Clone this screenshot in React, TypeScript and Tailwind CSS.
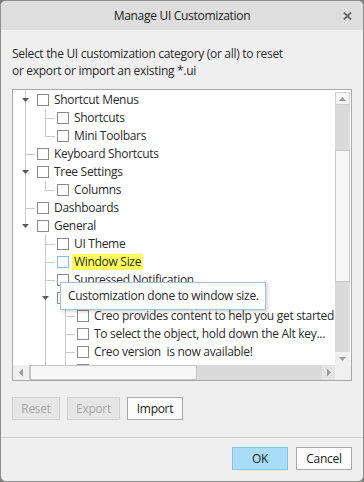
import React from 'react';

type Cell = 'none' | 'pass' | 'tee' | 'end' | 'arrow' | 'arrowEnd';

// visible part of the customization tree, top rows scrolled out of view
const rows: { id: number; label: string; cells: Cell[]; hover?: boolean }[] = [
  { id: 1, label: 'Shortcut Menus', cells: ['arrow'] },
  { id: 2, label: 'Shortcuts', cells: ['pass', 'tee'] },
  { id: 3, label: 'Mini Toolbars', cells: ['pass', 'end'] },
  { id: 4, label: 'Keyboard Shortcuts', cells: ['tee'] },
  { id: 5, label: 'Tree Settings', cells: ['arrow'] },
  { id: 6, label: 'Columns', cells: ['pass', 'end'] },
  { id: 7, label: 'Dashboards', cells: ['tee'] },
  { id: 8, label: 'General', cells: ['arrowEnd'] },
  { id: 9, label: 'UI Theme', cells: ['none', 'tee'] },
  { id: 10, label: 'Window Size', cells: ['none', 'tee'], hover: true },
  { id: 11, label: 'Supressed Notification', cells: ['none', 'tee'] },
  { id: 12, label: '', cells: ['none', 'arrow'] },
  { id: 13, label: 'Creo provides content to help you get started', cells: ['none', 'pass', 'tee'] },
  { id: 14, label: 'To select the object, hold down the Alt key...', cells: ['none', 'pass', 'tee'] },
  { id: 15, label: 'Creo version  is now available!', cells: ['none', 'pass', 'tee'] },
  { id: 16, label: '', cells: ['none', 'pass', 'tee'] },
];

const GuideCell = ({ type }: { type: Cell }) => (
  <svg width="20" height="18" className="shrink-0">
    {(type === 'pass' || type === 'tee' || type === 'arrow') && (
      <line x1="10.5" y1="0" x2="10.5" y2="18" stroke="#c9c9c9" />
    )}
    {(type === 'end' || type === 'arrowEnd') && (
      <line x1="10.5" y1="0" x2="10.5" y2="9.5" stroke="#c9c9c9" />
    )}
    {(type === 'tee' || type === 'end') && (
      <line x1="10" y1="9.5" x2="20" y2="9.5" stroke="#c9c9c9" />
    )}
    {(type === 'arrow' || type === 'arrowEnd') && (
      <polygon points="7,7 14,7 10.5,11" fill="#5a5a5a" />
    )}
  </svg>
);

const TreeRow = ({ label, cells, hover }: { label: string; cells: Cell[]; hover?: boolean }) => (
  <div className="h-[18px] flex items-center whitespace-pre">
    {cells.map((c, i) => (
      <GuideCell key={i} type={c} />
    ))}
    <span
      className={`ml-[2px] w-[12px] h-[12px] shrink-0 bg-white border ${
        hover ? 'border-[#7fbfe2]' : 'border-[#8a8a8a]'
      }`}
    />
    {hover ? (
      <span className="ml-[3px] px-[2px] leading-[16px] bg-[#ffff5c]">{label}</span>
    ) : (
      label && <span className="ml-[5px] leading-[16px]">{label}</span>
    )}
  </div>
);

const Arrow = ({ dir }: { dir: 'up' | 'down' | 'left' | 'right' }) => {
  const pts = {
    up: '1,5 8,5 4.5,1',
    down: '1,1 8,1 4.5,5',
    left: '5,0.5 5,8.5 1,4.5',
    right: '1,0.5 1,8.5 5,4.5',
  }[dir];
  const vertical = dir === 'up' || dir === 'down';
  return (
    <svg width={vertical ? 9 : 6} height={vertical ? 6 : 9}>
      <polygon points={pts} fill="#9a9a9a" />
    </svg>
  );
};

export default function App() {
  return (
    <div className="w-[364px] h-[482px] bg-[#7c7c78] font-['Open_Sans',sans-serif] text-[12px] tracking-[-0.3px] text-[#2b2b2b]">
      <div className="h-full flex flex-col rounded-[6px] border border-[#8f8f8f] bg-[#efefef] overflow-hidden">
        {/* title bar */}
        <div className="relative h-[29px] shrink-0 bg-[#dedede] flex items-center justify-center text-[#222]">
          <span>Manage UI Customization</span>
          <svg className="absolute right-[11px] top-[11px]" width="9" height="8" viewBox="0 0 9 8">
            <path d="M1 0.5 L8 7.5 M8 0.5 L1 7.5" stroke="#6a6a6a" strokeWidth="1.8" />
          </svg>
        </div>

        <div className="px-[11px] pt-[15px] leading-[17px]">
          Select the UI customization category (or all) to reset
          <br />
          or export or import an existing *.ui
        </div>

        {/* tree box */}
        <div className="mx-[11px] mt-[10px] w-[340px] h-[292px] shrink-0 border border-[#a9a9a9] bg-white flex flex-col">
          <div className="flex h-[275px]">
            <div className="relative flex-1 overflow-hidden pt-[1px] pl-[2px]">
              {rows.map((r) => (
                <TreeRow key={r.id} label={r.label} cells={r.cells} hover={r.hover} />
              ))}
              <div className="absolute left-[47px] top-[192px] w-[206px] h-[28px] bg-[#fdfdfd] border border-[#a9bfd2] shadow-[2px_2px_3px_rgba(0,0,0,0.15)] flex items-center pl-[7px]">
                Customization done to window size.
              </div>
            </div>
            {/* vertical scrollbar */}
            <div className="w-[15px] mr-[1px] flex flex-col pt-[2px]">
              <div className="h-[13px] bg-[#f7f7f7] border border-[#d0d0d0] flex items-center justify-center">
                <Arrow dir="up" />
              </div>
              <div className="h-[45px] bg-[#dadada]" />
              <div className="h-[132px] bg-[#f7f7f7] border border-[#c6c6c6]" />
              <div className="h-[70px] bg-[#dadada]" />
              <div className="h-[13px] bg-[#f0f0f0] flex items-center justify-center">
                <Arrow dir="down" />
              </div>
            </div>
          </div>
          {/* horizontal scrollbar */}
          <div className="flex h-[15px]">
            <div className="w-[17px] bg-[#f0f0f0] border-r border-[#c9c9c9] flex items-center justify-center">
              <Arrow dir="left" />
            </div>
            <div className="w-[167px] bg-[#f7f7f7] border border-[#c6c6c6]" />
            <div className="w-[125px] bg-[#dadada]" />
            <div className="w-[13px] bg-[#e4e4e4] flex items-center justify-center">
              <Arrow dir="right" />
            </div>
            <div className="flex-1 bg-[#f0f0f0]" />
          </div>
        </div>

        {/* action buttons */}
        <div className="mt-[16px] px-[11px] flex gap-[7px]">
          <button className="w-[48px] h-[23px] bg-[#e6e6e6] border border-[#d2d2d2] text-[#a6a6a6]">Reset</button>
          <button className="w-[53px] h-[23px] bg-[#e6e6e6] border border-[#d2d2d2] text-[#a6a6a6]">Export</button>
          <button className="w-[56px] h-[23px] bg-[#fbfbfb] border border-[#a8a8a8] text-[#222]">Import</button>
        </div>

        <div className="mt-[17px] h-px bg-[#d2d2d2] shrink-0" />

        <div className="mt-[9px] px-[11px] flex justify-end gap-[8px]">
          <button className="w-[56px] h-[23px] bg-[#a9dcf6] border border-[#83c6ea] text-[#222]">OK</button>
          <button className="w-[56px] h-[23px] bg-[#fdfdfd] border border-[#a8a8a8] text-[#222]">Cancel</button>
        </div>
      </div>
    </div>
  );
}
